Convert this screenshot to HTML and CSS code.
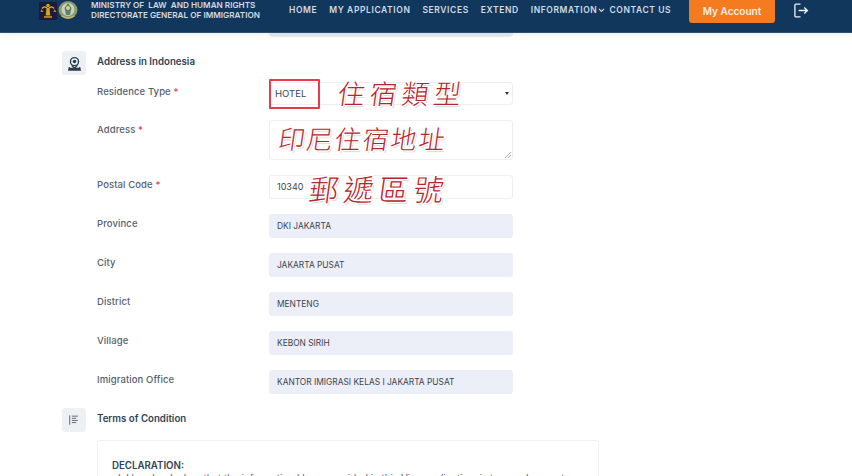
FILE: index.html
```html
<!DOCTYPE html>
<html lang="en">
<head>
<meta charset="utf-8">
<title>Address in Indonesia</title>
<link rel="stylesheet" href="styles.css">
</head>
<body>
<header class="topbar">
  <div class="brand">
    <svg class="logo-a" viewBox="0 0 18 18" width="18" height="18">
      <rect width="18" height="18" fill="#1c1a40"/>
      <path d="M3 6.500C5 4 7 5 9 7c2-2 4-3 6-.5" stroke="#d9a21f" stroke-width="1.500" fill="none"/>
      <path d="M7.500 6.500h3l.8 7h-4.600z" fill="#d9a21f"/>
      <circle cx="9" cy="3.500" r="1.800" fill="#d9a21f"/>
      <path d="M5 15h8" stroke="#d9a21f" stroke-width="1.500"/>
      <path d="M2.500 7l-1 3h3zM15.500 7l-1 3h3z" fill="#b98a1c"/>
    </svg>
    <svg class="logo-b" viewBox="0 0 20 20" width="20" height="20">
      <ellipse cx="10" cy="10" rx="9.500" ry="9" fill="#8b9a6c"/>
      <ellipse cx="10" cy="9.500" rx="6.500" ry="6.500" fill="#c9d2c0"/>
      <path d="M10 3l3.500 5-1.500 7H8L6.500 8z" fill="#5f8266"/>
      <circle cx="10" cy="8" r="2" fill="#dccf8a"/>
      <path d="M4 16c3 2.500 9 2.500 12 0" stroke="#c9b765" stroke-width="1.500" fill="none"/>
    </svg>
    <div class="brand-text">
      <div>MINISTRY OF &nbsp;LAW &nbsp;AND HUMAN RIGHTS</div>
      <div>DIRECTORATE GENERAL OF IMMIGRATION</div>
    </div>
  </div>
  <nav class="nav">
    <a>HOME</a>
    <a>MY APPLICATION</a>
    <a>SERVICES</a>
    <a>EXTEND</a>
    <a class="has-caret">INFORMATION<svg viewBox="0 0 8 6" width="7" height="5"><path d="M1 1l3 3 3-3" stroke="#d5dce4" stroke-width="1.400" fill="none"/></svg></a>
    <a>CONTACT US</a>
  </nav>
  <button class="account">My Account</button>
  <svg class="logout" viewBox="0 0 16 16" width="16" height="15">
    <path d="M7.500 1.200H2.500a1 1 0 0 0-1 1v11.600a1 1 0 0 0 1 1h5M5.500 8H14.500M11.500 4.800L14.800 8l-3.300 3.200" stroke="#eef2f6" stroke-width="1.400" fill="none"/>
  </svg>
</header>

<main class="page">
  <div class="sliver"></div>

  <section class="section-head first">
    <div class="section-icon">
      <svg viewBox="0 0 16 16" width="15" height="15">
        <circle cx="8" cy="6" r="4.300" stroke="#2c3e50" stroke-width="1.500" fill="none"/>
        <circle cx="8" cy="5.800" r="1.900" fill="#2c3e50"/>
        <path d="M5 10l3 3 3-3" stroke="#2c3e50" stroke-width="1.500" fill="none"/>
        <path d="M3 12.500h-.5L2 14.800h12l-.5-2.300H13" stroke="#2c3e50" stroke-width="1.600" fill="#2c3e50"/>
      </svg>
    </div>
    <h2>Address in Indonesia</h2>
  </section>

  <div class="form">
    <div class="row">
      <label>Residence Type <span class="req">*</span></label>
      <div class="select">
        <span class="value-dark">HOTEL</span>
        <span class="caret"></span>
        <span class="highlight"></span>
        <span class="note note-type">住宿類型</span>
      </div>
    </div>
    <div class="row">
      <label>Address <span class="req">*</span></label>
      <div class="textarea">
        <span class="note note-address">印尼住宿地址</span>
        <svg class="grip" viewBox="0 0 6 6" width="6" height="6"><path d="M0 6l6-6M3 6l3-3" stroke="#8a8f96" stroke-width=".8"/></svg>
      </div>
    </div>
    <div class="row">
      <label>Postal Code <span class="req">*</span></label>
      <div class="input">10340<span class="note note-postal">郵遞區號</span></div>
    </div>
    <div class="row">
      <label>Province</label>
      <div class="input filled">DKI JAKARTA</div>
    </div>
    <div class="row">
      <label>City</label>
      <div class="input filled">JAKARTA PUSAT</div>
    </div>
    <div class="row">
      <label>District</label>
      <div class="input filled">MENTENG</div>
    </div>
    <div class="row">
      <label>Village</label>
      <div class="input filled">KEBON SIRIH</div>
    </div>
    <div class="row">
      <label>Imigration Office</label>
      <div class="input filled">KANTOR IMIGRASI KELAS I JAKARTA PUSAT</div>
    </div>
  </div>

  <section class="section-head second">
    <div class="section-icon">
      <svg viewBox="0 0 14 14" width="12" height="12">
        <path d="M2 1.500v11M4.500 2.500h7M4.500 5h5M4.500 7.500h7M4.500 10h5" stroke="#5a6672" stroke-width="1.100" fill="none"/>
      </svg>
    </div>
    <h2>Terms of Condition</h2>
  </section>

  <div class="card">
    <h3>DECLARATION:</h3>
    <p>I, I hereby declare that the information I have provided in this Visa application, is true and correct</p>
  </div>
</main>
</body>
</html>
```

FILE: styles.css
```css
* { box-sizing: border-box; }
html, body { margin: 0; height: 476px; overflow: hidden; background: #fff; }
body { font-family: Inter, "Liberation Sans", sans-serif; color: #43505e; }

.topbar {
  position: relative;
  height: 33px;
  background: #12375c;
  display: flex;
  align-items: flex-start;
  padding-left: 39px;
  border-bottom: 1px solid #2d4f72;
  box-shadow: 0 2px 5px rgba(40, 60, 80, .08);
}
.brand { display: flex; align-items: flex-start; }
.logo-a { margin-top: 2px; }
.logo-b { margin: 0 0 0 1px; }
.brand-text {
  margin: 0 0 0 13px;
  color: #d3dae2;
  font-size: 8.200px;
  line-height: 10px;
  font-weight: 600;
  white-space: nowrap;
  width: 198px;
}
.nav {
  display: flex;
  width: 400px;
  margin: 4px 0 0 0;
  padding-top: 1px;
  gap: 12px;
  color: #d5dce4;
  font-size: 8.500px;
  line-height: 11px;
  font-weight: 600;
  letter-spacing: .6px;
  white-space: nowrap;
}
.nav a { display: flex; align-items: center; }
.has-caret { margin-right: -8px; }
.has-caret svg { margin-left: 1px; }
.account {
  width: 86px;
  height: 23px;
  border: 0;
  border-radius: 0 0 3px 3px;
  background: #f47b20;
  color: #fbeee2;
  font: 600 10px/10px Inter, "Liberation Sans", sans-serif;
  padding: 0 0 2px;
}
.logout { margin: 3px 0 0 18px; }

.page { padding-left: 62px; }
.sliver {
  width: 244px;
  height: 4px;
  margin-left: 207px;
  background: #e9ebf1;
  border-radius: 0 0 4px 4px;
}

.section-head { display: flex; align-items: flex-start; gap: 11px; }
.section-head.first { margin-top: 14px; }
.section-head.second { margin-top: 14px; }
.section-icon {
  width: 24px;
  height: 24px;
  background: #eef1f4;
  border-radius: 3px;
  display: flex;
  align-items: center;
  justify-content: center;
}
h2 {
  margin: 5px 0 0;
  font-size: 9.700px;
  line-height: 12px;
  font-weight: 600;
  color: #2f4459;
}

.form { padding-left: 35px; margin-top: 7px; display: flex; flex-direction: column; gap: 15px; }
.row { display: flex; align-items: flex-start; }
label {
  width: 172px;
  margin-top: 4px;
  font-size: 9.500px;
  line-height: 12px;
  color: #56626e;
  font-weight: 500;
  letter-spacing: .1px;
}
.req { color: #e5394b; }
.select, .input, .textarea {
  position: relative;
  width: 244px;
  height: 24px;
  border: 1px solid #eceef1;
  border-radius: 3px;
  background: #fff;
  font-size: 9px;
  line-height: 22px;
  color: #3a4550;
  padding-left: 7px;
}
.select { height: 23px; padding-left: 5px; }
.textarea { height: 40px; }
.input.filled {
  background: #eceef8;
  border-color: #eceef8;
  font-size: 8.400px;
}
.value-dark { font-size: 9.500px; color: #34495e; }
.caret {
  position: absolute;
  right: 3px;
  top: 9px;
  border: 2.500px solid transparent;
  border-top: 3px solid #333;
}
.highlight {
  position: absolute;
  left: -1px;
  top: -4px;
  width: 51px;
  height: 30px;
  border: 2px solid #ea3a4b;
  border-radius: 1px;
}
.grip { position: absolute; right: 1px; bottom: 1px; }
.note {
  position: absolute;
  font-family: "Noto Sans CJK TC", sans-serif;
  font-weight: 300;
  color: #b5262c;
  white-space: nowrap;
  transform: skewX(-8deg);
  text-shadow: 1px 1px 0 #fff, -1px -1px 0 #fff, 1px -1px 0 #fff, -1px 1px 0 #fff, 2px 2px 1px #d8d8d8;
}
.note-type { left: 68px; top: -5px; font-size: 27px; line-height: 30px; letter-spacing: 5px; }
.note-address { left: 9px; top: 2px; font-size: 26px; line-height: 30px; letter-spacing: 2px; }
.note-postal { left: 39px; top: -5px; font-size: 30px; line-height: 34px; letter-spacing: 5px; }

.card {
  margin: 8px 0 0 35px;
  width: 502px;
  height: 36px;
  border: 1px solid #eef0f2;
  border-bottom: 0;
  border-radius: 4px 4px 0 0;
  padding: 19px 14px 0;
}
h3 {
  margin: 0;
  font-size: 9.700px;
  line-height: 12px;
  font-weight: 600;
  color: #2f4459;
}
.card p {
  margin: 1px 0 0;
  font-size: 9.800px;
  line-height: 12px;
  color: #5a6672;
  white-space: nowrap;
  padding-left: 6px;
}
```
